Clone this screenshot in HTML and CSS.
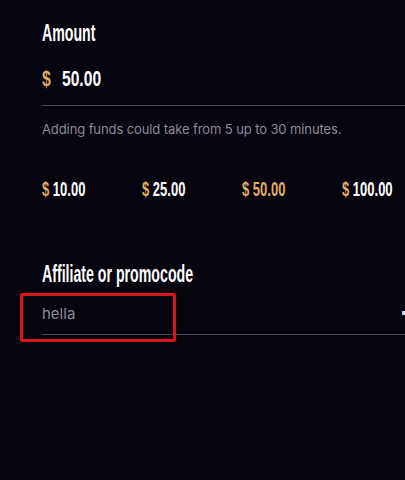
FILE: index.html
```html
<!DOCTYPE html>
<html>
<head>
<meta charset="utf-8">
<link rel="stylesheet" href="styles.css">
</head>
<body>
<div class="panel">
  <div class="field">
    <div class="label"><span class="cond">Amount</span></div>
    <div class="amount-row">
      <span class="cond cur">$</span>
      <span class="cond val">50.00</span>
    </div>
    <div class="underline"></div>
  </div>
  <p class="hint">Adding funds could take from 5 up to 30 minutes.</p>
  <div class="presets">
    <div class="preset"><span class="cond"><span class="cur">$</span> 10.00</span></div>
    <div class="preset"><span class="cond"><span class="cur">$</span> 25.00</span></div>
    <div class="preset active"><span class="cond"><span class="cur">$</span> 50.00</span></div>
    <div class="preset"><span class="cond"><span class="cur">$</span> 100.00</span></div>
  </div>
  <div class="field promo">
    <div class="label"><span class="cond">Affiliate or promocode</span></div>
    <div class="promo-input">hella</div>
    <div class="underline"></div>
    <div class="annot"></div>
    <div class="edge"></div>
  </div>
</div>
</body>
</html>
```
FILE: styles.css
```css
html, body {
  margin: 0;
  padding: 0;
  background: #06040e;
  width: 405px;
  height: 480px;
  overflow: hidden;
}
.panel {
  padding: 21px 0 0 42px;
  font-family: "Inter", "Roboto", sans-serif;
  color: #ffffff;
}
.cond {
  font-family: "Liberation Sans", sans-serif;
  font-weight: 700;
  display: inline-block;
  transform-origin: left center;
  white-space: nowrap;
}
.label {
  height: 24px;
  line-height: 24px;
  font-size: 24px;
}
.label .cond {
  transform: scaleX(0.59);
}
.amount-row {
  margin-top: 22px;
  height: 24px;
  line-height: 24px;
  font-size: 22px;
  display: flex;
}
.amount-row .cur {
  color: #e0ad64;
  width: 20px;
  transform: scaleX(0.72);
}
.amount-row .val {
  transform: scaleX(0.71);
}
.underline {
  height: 1px;
  background: #46445a;
  margin-top: 14px;
}
.hint {
  margin: 15px 0 0 0;
  font-size: 13px;
  line-height: 16px;
  letter-spacing: -0.1px;
  color: #8d8b98;
}
.presets {
  display: flex;
  margin-top: 41px;
  height: 22px;
  line-height: 22px;
  font-size: 20px;
}
.preset {
  width: 100px;
  flex: none;
}
.preset:last-child {
  width: auto;
}
.preset .cond {
  transform: scaleX(0.65);
}
.preset .cur {
  color: #e0ad64;
}
.preset.active .cond {
  color: #e0ad64;
}
.promo {
  position: relative;
  margin-top: 62px;
}
.promo-input {
  margin-top: 18px;
  height: 20px;
  line-height: 20px;
  font-size: 15px;
  color: #8d8b98;
}
.promo .underline {
  margin-top: 10px;
}
.annot {
  position: absolute;
  left: -22px;
  top: 31px;
  width: 150px;
  height: 43px;
  border: 3px solid #d8151b;
  border-radius: 2px;
}
.edge {
  position: absolute;
  left: 360px;
  top: 49px;
  width: 3px;
  height: 4px;
  background: #cfd3ee;
}
```
